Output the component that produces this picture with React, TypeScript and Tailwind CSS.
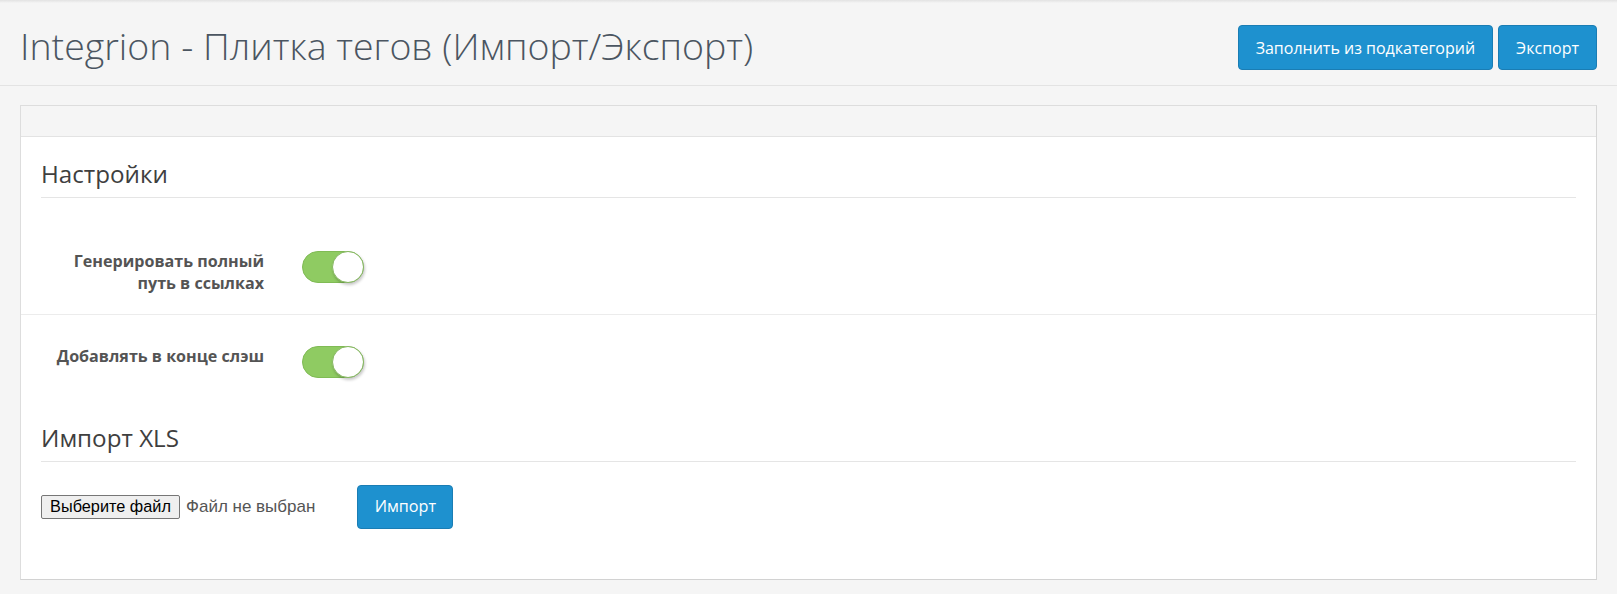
import React from "react";

function Toggle() {
  return (
    <div className="relative w-[62px] h-[32px] rounded-full bg-[#8fcb62] border border-[#80bb55]">
      <div className="absolute right-[-1px] top-[-1px] w-[32px] h-[32px] rounded-full bg-white border border-[#86b861] shadow-[1px_2px_3px_rgba(0,0,0,0.22)]" />
    </div>
  );
}

export default function App() {
  const font = { fontFamily: '"Open Sans", "Liberation Sans", sans-serif' };
  const arial = { fontFamily: '"Liberation Sans", Arial, sans-serif' };
  return (
    <div className="w-[1617px] h-[594px] bg-[#f5f5f5] overflow-hidden" style={font}>
      <div className="h-[3px] bg-gradient-to-b from-[#e2e2e2] to-[#f5f5f5]" />
      <div className="h-[83px] border-b border-[#e3e3e3] px-[20px] flex items-start justify-between">
        <h1 className="mt-[21px] text-[37.5px] leading-[43px] font-light text-[#4b5561]">
          Integrion - Плитка тегов (Импорт/Экспорт)
        </h1>
        <div className="flex gap-[5px] mt-[22px]">
          <button className="h-[45px] px-[17px] rounded-[4px] bg-[#1e91cf] border border-[#1a7db4] text-white text-[16px] leading-[22px]">
            Заполнить из подкатегорий
          </button>
          <button className="h-[45px] px-[17px] rounded-[4px] bg-[#1e91cf] border border-[#1a7db4] text-white text-[16px] leading-[22px]">
            Экспорт
          </button>
        </div>
      </div>
      <div className="mx-[20px] mt-[19px] h-[475px] border border-[#dddddd] border-b-[#d2d2d2] border-r-[#d6d6d6] bg-white">
        <div className="h-[31px] bg-[#f5f5f5] border-b border-[#e3e3e3]" />
        <div className="pt-[20px]">
          <div className="px-[20px]">
            <div className="text-[24.2px] leading-[33px] text-[#3f3f3f] pb-[7px] border-b border-[#e5e5e5]">
              Настройки
            </div>
          </div>
          <div className="flex pt-[52px] pb-[19px]">
            <div className="w-[263px] pr-[20px] text-right text-[16.1px] leading-[22.3px] font-bold text-[#545454]">
              Генерировать полный
              <br />
              путь в ссылках
            </div>
            <div className="pl-[18px] pt-[1px]">
              <Toggle />
            </div>
          </div>
          <div className="flex border-t border-[#ececec] pt-[30px] pb-[20px]">
            <div className="w-[263px] pr-[20px] text-right text-[16.1px] leading-[22.3px] font-bold text-[#545454]">
              Добавлять в конце слэш
            </div>
            <div className="pl-[18px] pt-[1px]">
              <Toggle />
            </div>
          </div>
          <div className="px-[20px] pt-[23px]">
            <div className="text-[24.2px] leading-[33px] text-[#3f3f3f] pb-[7px] border-b border-[#e5e5e5]">
              Импорт XLS
            </div>
            <div className="flex items-center mt-[23px]">
              <div
                className="h-[24px] w-[139px] flex items-center justify-center bg-[#efefef] border border-[#767676] rounded-[2px] text-[16.3px] text-black"
                style={arial}
              >
                Выберите файл
              </div>
              <span className="ml-[6px] text-[17px] text-[#555]" style={arial}>
                Файл не выбран
              </span>
              <button className="ml-[42px] h-[44px] w-[96px] rounded-[4px] bg-[#1e91cf] border border-[#1a7db4] text-white text-[16.2px]">
                Импорт
              </button>
            </div>
          </div>
        </div>
      </div>
    </div>
  );
}
